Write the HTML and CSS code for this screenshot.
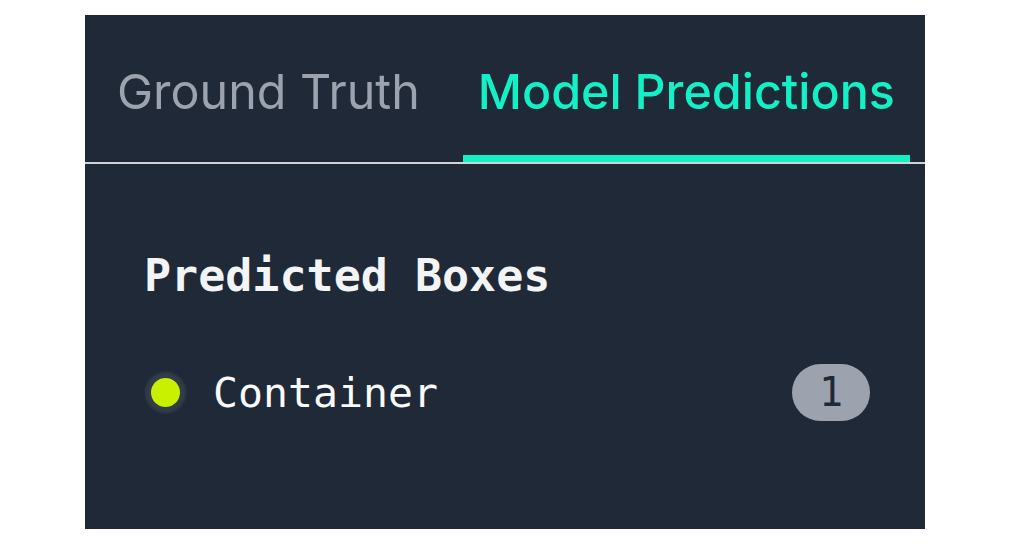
FILE: index.html
```html
<!DOCTYPE html>
<html lang="en">
<head>
    <meta charset="UTF-8">
    <meta name="viewport" content="width=device-width, initial-scale=1.0">
    <title>Predictions</title>
    <link rel="stylesheet" href="styles.css">
</head>
<body>
    <div class="panel">
        <nav class="tabs">
            <a class="tab" href="#truth">Ground Truth</a>
            <a class="tab active" href="#predictions">Model Predictions</a>
        </nav>
        <div class="content" id="predictions">
            <h2>Predicted Boxes</h2>
            <div class="label-row">
                <span class="dot"></span>
                <span class="label-name">Container</span>
                <span class="count">1</span>
            </div>
        </div>
    </div>
</body>
</html>
```

FILE: styles.css
```css
body {
    margin: 0;
    padding: 0;
    background-color: #ffffff;
}
.panel {
    width: 840px;
    height: 514px;
    margin: 15px 0 0 85px;
    background-color: #1f2937;
    font-family: 'DejaVu Sans Mono', monospace;
}
.tabs {
    display: flex;
    gap: 28px;
    padding-left: 17px;
    border-bottom: 2px solid #cfd3d9;
}
.tab {
    padding: 47px 15px 33px 15px;
    font-family: 'Inter', 'Liberation Sans', sans-serif;
    font-size: 48.4px;
    line-height: 60px;
    color: #9ca3af;
    text-decoration: none;
    border-bottom: 7px solid transparent;
}
.tab.active {
    font-weight: 500;
    color: #14f0c6;
    border-bottom-color: #14f0c6;
}
.content {
    padding: 0 55px 0 59px;
}
.content h2 {
    margin: 85px 0 0 0;
    font-size: 45px;
    line-height: 54px;
    font-weight: bold;
    color: #f3f4f6;
}
.label-row {
    display: flex;
    align-items: center;
    margin-top: 61px;
    height: 57px;
}
.dot {
    width: 29px;
    height: 29px;
    margin-left: 7px;
    margin-right: 33px;
    border-radius: 50%;
    background-color: #c8f000;
    box-shadow: 0 0 3px 6px rgba(75, 85, 99, 0.45);
}
.label-name {
    font-size: 41.5px;
    line-height: 48px;
    color: #f9fafb;
}
.count {
    margin-left: auto;
    width: 78px;
    height: 57px;
    border-radius: 29px;
    background-color: #9ca3af;
    color: #1f2937;
    font-size: 40px;
    line-height: 57px;
    text-align: center;
}
```
